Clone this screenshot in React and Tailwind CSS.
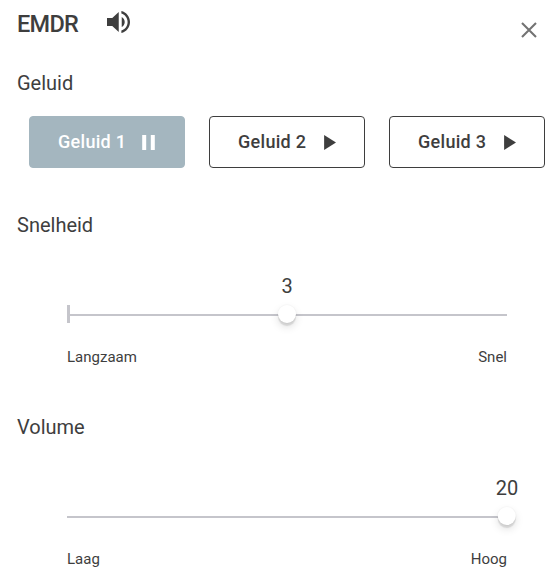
import { useState } from "react";
import clsx from "clsx";

const SOUNDS = ["Geluid 1", "Geluid 2", "Geluid 3"];

function VolumeIcon() {
  return (
    <svg viewBox="64 64 384 384" preserveAspectRatio="none" fill="currentColor" className="mb-1 h-[22px] w-[23px]">
      <path d="M64 188v136h88L260 432V80L152 188H64zm296 68c0-38-20-72-50-89v178c30-17 50-51 50-89zM304 64v42C364 125 408 185 408 256c0 71-44 131-104 150v42C387 428 448 349 448 256c0-93-61-172-144-192z" />
    </svg>
  );
}

function CloseIcon() {
  return (
    <svg viewBox="0 0 16 16" fill="none" stroke="currentColor" strokeWidth="2.1" className="size-4">
      <path d="M1 1l14 14M15 1L1 15" />
    </svg>
  );
}

function PauseIcon() {
  return (
    <svg viewBox="0 0 14 15" fill="currentColor" className="h-[15px] w-3.5">
      <path d="M0.2 0h4v15h-4zM8.8 0h4v15h-4z" />
    </svg>
  );
}

function PlayIcon() {
  return (
    <svg viewBox="0 0 14 15" fill="currentColor" className="h-[15px] w-3.5">
      <path d="M2.1 0v15L14 7.5z" />
    </svg>
  );
}

function SoundButton({ label, active, onClick }) {
  return (
    <button
      type="button"
      onClick={onClick}
      className={clsx(
        "flex h-[52px] w-[156px] items-center justify-between rounded-[4px] border px-7 text-[18px] font-medium tracking-[0.3px]",
        active ? "border-[#a4b6bf] bg-[#a4b6bf] text-white" : "border-[#3e3e3e] bg-white text-[#3e3e3e]"
      )}
    >
      <span className="pb-0.5">{label}</span>
      {active ? <PauseIcon /> : <PlayIcon />}
    </button>
  );
}

function RangeSlider({ title, value, percent, minLabel, maxLabel, tick }) {
  return (
    <section className="h-[202px]">
      <h2 className="pl-[17px] text-[20px] leading-6">{title}</h2>
      <div className="mr-[50px] ml-[67px] pt-[37px]">
        <div className="relative h-[54px]">
          <div className="absolute top-[40px] h-0.5 w-full bg-[#c5c5cb]" />
          {tick && <div className="absolute top-[31px] h-[18px] w-[3px] bg-[#c5c5cb]" />}
          <div
            className="absolute top-0 flex -translate-x-1/2 flex-col items-center"
            style={{ left: `${percent}%` }}
          >
            <span className="text-[20px] leading-6">{value}</span>
            <span className="mt-[7px] size-[18px] rounded-full bg-white shadow-[0_3px_1px_rgba(0,0,0,0.1),0_4px_8px_rgba(0,0,0,0.13),0_0_0_1px_rgba(0,0,0,0.02)]" />
          </div>
        </div>
        <div className="mt-[19px] flex justify-between text-[15px] leading-5">
          <span>{minLabel}</span>
          <span>{maxLabel}</span>
        </div>
      </div>
    </section>
  );
}

export default function App() {
  const [playing, setPlaying] = useState(0);

  return (
    <div className="h-[585px] w-[557px] overflow-hidden bg-white font-['Roboto',sans-serif] text-[#3e3e3e]">
      <header className="flex h-[71px] items-start justify-between pr-5 pl-[17px]">
        <div className="flex items-center gap-[28.5px] pt-2">
          <h1 className="text-[23.5px] leading-8 font-medium tracking-[-0.7px]">EMDR</h1>
          <VolumeIcon />
        </div>
        <button type="button" aria-label="Sluiten" className="mt-[22px] text-[#737373]">
          <CloseIcon />
        </button>
      </header>

      <section className="h-[142px]">
        <h2 className="pl-[17px] text-[20px] leading-6">Geluid</h2>
        <div className="mt-[21px] flex gap-6 pl-[29px]">
          {SOUNDS.map((label, i) => (
            <SoundButton key={label} label={label} active={playing === i} onClick={() => setPlaying(i)} />
          ))}
        </div>
      </section>

      <RangeSlider title="Snelheid" value={3} percent={50} minLabel="Langzaam" maxLabel="Snel" tick />
      <RangeSlider title="Volume" value={20} percent={100} minLabel="Laag" maxLabel="Hoog" />
    </div>
  );
}
